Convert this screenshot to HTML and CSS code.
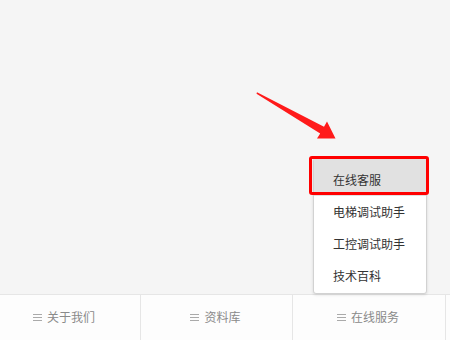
FILE: index.html
```html
<!DOCTYPE html>
<html lang="zh">
<head>
<meta charset="utf-8">
<link rel="stylesheet" href="styles.css">
</head>
<body>
<div class="page">
  <main class="content"></main>
  <nav class="tabbar">
    <div class="tab tab-1"><span class="ham"><i></i><i></i><i></i></span>关于我们</div>
    <div class="tab tab-2"><span class="ham"><i></i><i></i><i></i></span>资料库</div>
    <div class="tab tab-3"><span class="ham"><i></i><i></i><i></i></span>在线服务</div>
    <div class="tab tab-4"></div>
  </nav>
</div>
<ul class="menu">
  <li class="item active">在线客服</li>
  <li class="item">电梯调试助手</li>
  <li class="item">工控调试助手</li>
  <li class="item">技术百科</li>
</ul>
<div class="mark"></div>
<svg class="arrow" width="450" height="340" viewBox="0 0 450 340">
  <polygon points="257,92.3 324,126.8 327,121.6 335.5,138.5 317,138.6 320.2,133.6 256.5,93.7" fill="#ff1a1a"/>
</svg>
</body>
</html>
```
FILE: styles.css
```css
html, body {
  margin: 0;
  padding: 0;
}
body {
  width: 450px;
  height: 340px;
  overflow: hidden;
  background: #f5f5f5;
  font-family: "Noto Sans CJK SC", "Noto Sans", sans-serif;
  position: relative;
}
.page {
  height: 340px;
  display: flex;
  flex-direction: column;
}
.content {
  flex: 1;
}
.tabbar {
  height: 45px;
  border-top: 1px solid #e6e6e6;
  background: #fdfdfd;
  display: grid;
  grid-template-columns: 141px 152px 153px 1fr;
}
.tab {
  display: flex;
  align-items: center;
  justify-content: center;
  font-size: 12px;
  color: #8a8a8a;
  border-right: 1px solid #e6e6e6;
  padding-bottom: 2px;
}
.tab-1 { padding-right: 12px; }
.tab-2 { padding-right: 2px; }
.tab-3 { padding-right: 2px; }
.tab-4 { border-right: none; }
.ham {
  display: inline-flex;
  flex-direction: column;
  gap: 2px;
  width: 9px;
  margin-right: 5px;
  margin-top: 1px;
}
.ham i {
  display: block;
  height: 1px;
  background: #aaaaaa;
}
.menu {
  position: absolute;
  left: 313px;
  top: 158px;
  width: 112px;
  margin: 0;
  padding: 0 0 1px 0;
  list-style: none;
  background: #ffffff;
  border: 1px solid #d2d2d2;
  border-radius: 3px;
  box-shadow: 0 1px 3px rgba(0,0,0,0.12);
}
.item {
  height: 32px;
  line-height: 32px;
  padding-left: 19px;
  font-size: 12px;
  color: #333333;
}
.item.active {
  background: #e1e1e1;
  height: 37px;
  line-height: 31px;
  padding-top: 5px;
  box-sizing: border-box;
}
.mark {
  position: absolute;
  left: 309px;
  top: 156px;
  width: 114px;
  height: 33px;
  border: 3px solid #ff0000;
  border-radius: 3px;
}
.arrow {
  position: absolute;
  left: 0;
  top: 0;
}
```
